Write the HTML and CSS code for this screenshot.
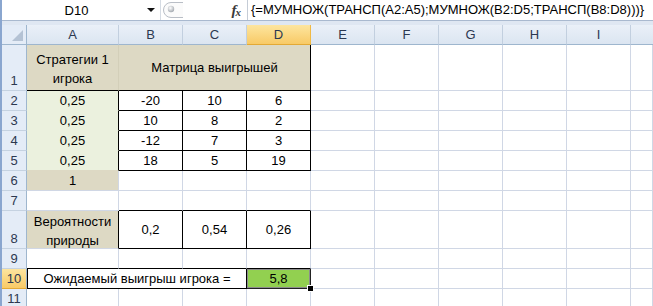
FILE: index.html
```html
<!DOCTYPE html>
<html>
<head>
<meta charset="utf-8">
<link rel="stylesheet" href="styles.css">
</head>
<body>
<div class="app">
  <div class="fbar">
    <div class="namebox"><span class="nb-text">D10</span><span class="nb-arrow"></span></div>
    <div class="grip">
      <svg width="22" height="20" viewBox="0 0 22 20">
        <defs>
          <radialGradient id="g" cx="0.4" cy="0.35" r="0.7">
            <stop offset="0" stop-color="#ffffff"/>
            <stop offset="1" stop-color="#9ea4ab"/>
          </radialGradient>
        </defs>
        <path d="M22 2.5 H10 A7.5 7.5 0 0 0 10 17.5 H22" fill="#fbfbfb" stroke="#b9bec6" stroke-width="1"/>
        <circle cx="10" cy="9" r="3.2" fill="url(#g)"/>
      </svg>
    </div>
    <div class="fxarea"><span class="fx">f<span class="fx-x">x</span></span></div>
    <div class="formula">{=МУМНОЖ(ТРАНСП(A2:A5);МУМНОЖ(B2:D5;ТРАНСП(B8:D8)))}</div>
  </div>
  <div class="strip"></div>
  <div class="sheet">
    <!-- header row -->
    <div class="corner"></div>
    <div class="ch">A</div><div class="ch">B</div><div class="ch">C</div><div class="ch sel">D</div>
    <div class="ch">E</div><div class="ch">F</div><div class="ch">G</div><div class="ch">H</div><div class="ch">I</div><div class="ch last"></div>

    <!-- row 1 -->
    <div class="rh">1</div>
    <div class="c tan wrap bbk brt">Стратегии 1 игрока</div>
    <div class="c tan span3 bbk brk">Матрица выигрышей</div>
    <div class="c"></div><div class="c"></div><div class="c"></div><div class="c"></div><div class="c"></div><div class="c"></div>

    <!-- rows 2-5 -->
    <div class="rh">2</div>
    <div class="c grn brk bbg">0,25</div><div class="c brk bbk">-20</div><div class="c brk bbk">10</div><div class="c brk bbk">6</div>
    <div class="c"></div><div class="c"></div><div class="c"></div><div class="c"></div><div class="c"></div><div class="c"></div>

    <div class="rh">3</div>
    <div class="c grn brk bbg">0,25</div><div class="c brk bbk">10</div><div class="c brk bbk">8</div><div class="c brk bbk">2</div>
    <div class="c"></div><div class="c"></div><div class="c"></div><div class="c"></div><div class="c"></div><div class="c"></div>

    <div class="rh">4</div>
    <div class="c grn brk bbg">0,25</div><div class="c brk bbk">-12</div><div class="c brk bbk">7</div><div class="c brk bbk">3</div>
    <div class="c"></div><div class="c"></div><div class="c"></div><div class="c"></div><div class="c"></div><div class="c"></div>

    <div class="rh">5</div>
    <div class="c grn brk bbt">0,25</div><div class="c brk bbk">18</div><div class="c brk bbk">5</div><div class="c brk bbk">19</div>
    <div class="c"></div><div class="c"></div><div class="c"></div><div class="c"></div><div class="c"></div><div class="c"></div>

    <!-- row 6 -->
    <div class="rh">6</div>
    <div class="c tan">1</div><div class="c"></div><div class="c"></div><div class="c"></div>
    <div class="c"></div><div class="c"></div><div class="c"></div><div class="c"></div><div class="c"></div><div class="c"></div>

    <!-- row 7 -->
    <div class="rh">7</div>
    <div class="c"></div><div class="c bbk"></div><div class="c bbk"></div><div class="c bbk"></div>
    <div class="c"></div><div class="c"></div><div class="c"></div><div class="c"></div><div class="c"></div><div class="c"></div>

    <!-- row 8 -->
    <div class="rh">8</div>
    <div class="c tan wrap brk">Вероятности природы</div><div class="c brk bbk">0,2</div><div class="c brk bbk">0,54</div><div class="c brk bbk">0,26</div>
    <div class="c"></div><div class="c"></div><div class="c"></div><div class="c"></div><div class="c"></div><div class="c"></div>

    <!-- row 9 -->
    <div class="rh">9</div>
    <div class="c bbk"></div><div class="c bbk"></div><div class="c bbk"></div><div class="c bbk"></div>
    <div class="c"></div><div class="c"></div><div class="c"></div><div class="c"></div><div class="c"></div><div class="c"></div>

    <!-- row 10 -->
    <div class="rh selr">10</div>
    <div class="c span3 blk brk bbk">Ожидаемый выигрыш игрока =</div>
    <div class="c active brk bbk">5,8</div>
    <div class="c"></div><div class="c"></div><div class="c"></div><div class="c"></div><div class="c"></div><div class="c"></div>

    <!-- row 11 -->
    <div class="rh">11</div>
    <div class="c"></div><div class="c"></div><div class="c"></div><div class="c"></div>
    <div class="c"></div><div class="c"></div><div class="c"></div><div class="c"></div><div class="c"></div><div class="c"></div>
  </div>
</div>
</body>
</html>
```

FILE: styles.css
```css
html, body {
  margin: 0;
  padding: 0;
  background: #ffffff;
}
body {
  width: 653px;
  height: 306px;
  overflow: hidden;
  font-family: "Liberation Sans", Arial, sans-serif;
  font-size: 13px;
  color: #000;
}
.app {
  border-left: 2px solid #8aa6cf;
  height: 306px;
  box-sizing: border-box;
}
.fbar {
  display: flex;
  height: 21px;
  box-sizing: border-box;
  border-bottom: 1px solid #a9b9cf;
  background: #fff;
}
.namebox {
  width: 158px;
  display: flex;
  align-items: center;
  position: relative;
  border-right: 1px solid #d5dbe3;
}
.nb-text {
  flex: 1;
  text-align: center;
  padding-left: 4px;
}
.nb-arrow {
  width: 0;
  height: 0;
  border-left: 4px solid transparent;
  border-right: 4px solid transparent;
  border-top: 4px solid #111;
  margin-right: 5px;
}
.grip {
  width: 22px;
  display: flex;
  align-items: flex-start;
}
.fxarea {
  width: 65px;
  display: flex;
  justify-content: flex-end;
  align-items: center;
  padding-right: 7px;
  border-right: 1px solid #c5ccd6;
  box-sizing: border-box;
}
.fx {
  font-family: "Liberation Serif", serif;
  font-style: italic;
  font-weight: bold;
  font-size: 15px;
  color: #3a3a3a;
  letter-spacing: -1px;
}
.fx-x {
  font-size: 11px;
  position: relative;
  top: 1px;
}
.formula {
  flex: 1;
  padding-left: 3px;
  line-height: 20px;
  white-space: nowrap;
  overflow: hidden;
}
.strip {
  height: 4px;
  background: #dfe7f2;
}
.sheet {
  display: grid;
  grid-template-columns: 25px 92px repeat(8, 64px) 22px;
  grid-template-rows: 20px 46px repeat(6, 20px) 38px 20px 20px 20px;
}
.corner {
  background: #e4ecf7;
  border-right: 1px solid #9eb6ce;
  border-bottom: 1px solid #9eb6ce;
  position: relative;
}
.corner::after {
  content: "";
  position: absolute;
  right: 3px;
  bottom: 3px;
  width: 0;
  height: 0;
  border-left: 11px solid transparent;
  border-bottom: 11px solid #b4c2d4;
}
.ch {
  background: linear-gradient(#eaf0f8, #dbe5f1);
  border-right: 1px solid #c2cfdf;
  border-bottom: 1px solid #9eb6ce;
  display: flex;
  align-items: center;
  justify-content: center;
  color: #2c3850;
}
.ch.sel {
  background: linear-gradient(#fde59f, #f8ca66);
  border-right-color: #f0b944;
  border-bottom-color: #e3a935;
}
.ch.last {
  border-right: none;
}
.rh {
  background: #e4ecf7;
  border-right: 1px solid #9eb6ce;
  border-bottom: 1px solid #c5d2e1;
  display: flex;
  align-items: flex-end;
  justify-content: center;
  padding-bottom: 2px;
  box-sizing: border-box;
  color: #2c3850;
}
.rh.selr {
  background: linear-gradient(#fde59f, #f8ca66);
  border-bottom-color: #e3a935;
}
.c {
  box-sizing: border-box;
  border-right: 1px solid #d0d7e5;
  border-bottom: 1px solid #d0d7e5;
  display: flex;
  align-items: center;
  justify-content: center;
  text-align: center;
  white-space: nowrap;
}
.c.wrap {
  white-space: normal;
  line-height: 19px;
  padding: 3px 4px 0;
}
.span3 {
  grid-column: span 3;
}
.tan {
  background: #ddd9c4;
}
.grn {
  background: #ebf1de;
}
.brk { border-right-color: #000; }
.brt { border-right-color: #d3cfb9; }
.bbk { border-bottom-color: #000; }
.bbg { border-bottom-color: #ebf1de; }
.bbt { border-bottom-color: #ddd9c4; }
.blk { border-left: 1px solid #000; }
.active {
  background: #92d050;
  position: relative;
  border-right-color: #222;
  border-bottom-color: #222;
  box-shadow: inset 0 0 0 1px #8c8c8c;
}
.active::after {
  content: "";
  position: absolute;
  right: -4px;
  bottom: -4px;
  width: 5px;
  height: 5px;
  background: #000;
  border: 1px solid #fff;
  z-index: 2;
}
```
